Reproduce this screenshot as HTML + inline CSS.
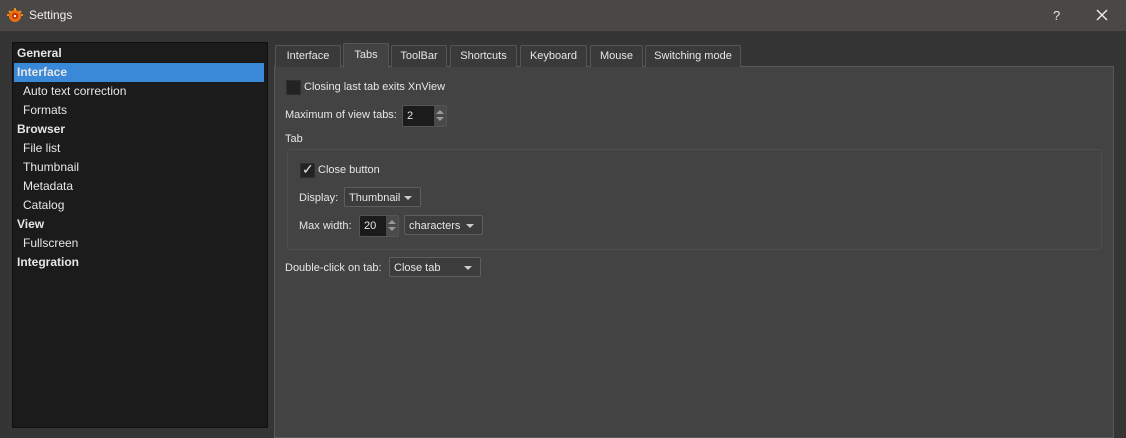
<!DOCTYPE html>
<html><head><style>
body{margin:0;width:1126px;height:426px;background:#353535;font-family:"Liberation Sans",sans-serif;font-size:11px;color:#e6e6e6;position:relative;overflow:hidden}
.a{position:absolute;white-space:nowrap}
.title{left:0;top:0;width:1126px;height:31px;background:#4a4846}
.list{left:12px;top:42px;width:254px;height:384px;background:#1b1b1b;border:1px solid #111}
.it{position:absolute;left:0;width:252px;height:19px;line-height:19px;font-size:12px}
.b{font-weight:bold;padding-left:4px;width:248px}
.s{padding-left:10px;width:242px}
.panel{left:274px;top:66px;width:838px;height:370px;background:#434343;border:1px solid #5a5a5a}
.tab{position:absolute;top:45px;height:21px;line-height:21px;background:#3a3a3a;border:1px solid #555;border-bottom:none;text-align:center;font-size:11px;border-radius:2px 2px 0 0}
.cb{position:absolute;width:13px;height:13px;background:#232323;border:1px solid #2e2e2e}
.spin{position:absolute;height:20px;background:#1b1b1b;border:1px solid #555;border-radius:2px;line-height:20px}
.combo{position:absolute;height:20px;background:#3c3c3c;border:1px solid #5e5e5e;border-radius:2px;line-height:20px;padding-left:4px;box-sizing:border-box}
.combo:after{content:"";position:absolute;right:8px;top:8px;border-left:4px solid transparent;border-right:4px solid transparent;border-top:4px solid #ccc}
.arr{position:absolute;right:0;top:0;width:12px;height:20px;background:#4a4a4a}
.arr:before{content:"";position:absolute;left:2px;top:4px;border-left:4px solid transparent;border-right:4px solid transparent;border-bottom:4px solid #999}
.arr:after{content:"";position:absolute;left:2px;top:11px;border-left:4px solid transparent;border-right:4px solid transparent;border-top:4px solid #999}
</style></head><body>
<div class="a title"></div>
<svg class="a" style="left:6px;top:6px" width="18" height="18" viewBox="0 0 18 18"><circle cx="9" cy="10" r="6" fill="#e8700f"/><circle cx="9" cy="10" r="3" fill="#c81e00"/><circle cx="9" cy="10" r="1.3" fill="#ffd"/><path d="M3 5l2 2M9 2v3M15 5l-2 2M1 9h2M15 9h2" stroke="#f08a1c" stroke-width="2"/></svg>
<div class="a" style="left:29px;top:8px;font-size:12px;color:#f0f0f0">Settings</div>
<div class="a" style="left:1053px;top:8px;font-size:13px">?</div>
<svg class="a" style="left:1096px;top:9px" width="12" height="12"><path d="M1 1L11 11M11 1L1 11" stroke="#eee" stroke-width="1.4"/></svg>
<div class="a list">
<div class="it b" style="top:1px">General</div>
<div class="it b" style="top:20px;background:#3a88d8;left:1px;width:247px;padding-left:3px">Interface</div>
<div class="it s" style="top:39px">Auto text correction</div>
<div class="it s" style="top:58px">Formats</div>
<div class="it b" style="top:77px">Browser</div>
<div class="it s" style="top:96px">File list</div>
<div class="it s" style="top:115px">Thumbnail</div>
<div class="it s" style="top:134px">Metadata</div>
<div class="it s" style="top:153px">Catalog</div>
<div class="it b" style="top:172px">View</div>
<div class="it s" style="top:191px">Fullscreen</div>
<div class="it b" style="top:210px">Integration</div>
</div>
<div class="a panel"></div>
<div class="tab" style="left:275px;width:64px">Interface</div>
<div class="tab" style="left:343px;width:44px;top:43px;height:24px;background:#434343;line-height:22px">Tabs</div>
<div class="tab" style="left:391px;width:54px">ToolBar</div>
<div class="tab" style="left:450px;width:65px">Shortcuts</div>
<div class="tab" style="left:520px;width:65px">Keyboard</div>
<div class="tab" style="left:590px;width:51px">Mouse</div>
<div class="tab" style="left:645px;width:94px">Switching mode</div>
<div class="cb" style="left:286px;top:80px"></div>
<div class="a" style="left:304px;top:81px">Closing last tab exits XnView</div>
<div class="a" style="left:285px;top:109px">Maximum of view tabs:</div>
<div class="spin" style="left:402px;top:105px;width:43px"><span style="padding-left:4px">2</span><div class="arr"></div></div>
<div class="a" style="left:285px;top:133px">Tab</div>
<div class="a" style="left:287px;top:149px;width:813px;height:99px;border:1px solid #4e4e4e;border-radius:3px"></div>
<div class="cb" style="left:300px;top:163px"></div>
<div class="a" style="left:302px;top:161px;font-size:14px">✓</div>
<div class="a" style="left:318px;top:164px">Close button</div>
<div class="a" style="left:299px;top:192px">Display:</div>
<div class="combo" style="left:344px;top:187px;width:77px">Thumbnail</div>
<div class="a" style="left:299px;top:220px">Max width:</div>
<div class="spin" style="left:359px;top:215px;width:38px"><span style="padding-left:4px">20</span><div class="arr"></div></div>
<div class="combo" style="left:404px;top:215px;width:79px">characters</div>
<div class="a" style="left:285px;top:262px">Double-click on tab:</div>
<div class="combo" style="left:389px;top:257px;width:92px">Close tab</div>
</body></html>
